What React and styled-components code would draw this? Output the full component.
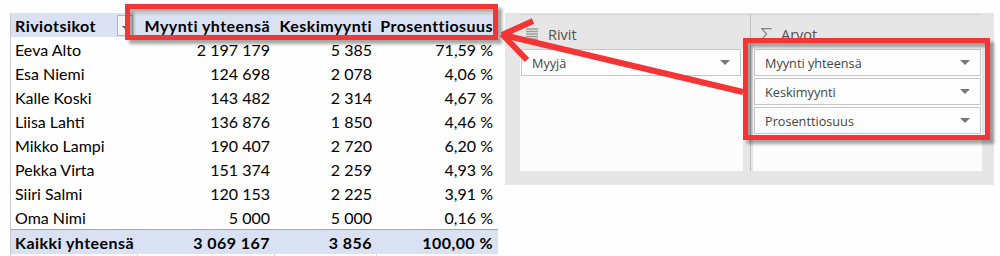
import React from 'react';
import styled, { createGlobalStyle } from 'styled-components';

const GlobalStyle = createGlobalStyle`
  body {
    margin: 0;
    background: #fefefe;
  }
`;

const Page = styled.div`
  position: relative;
  width: 1000px;
  height: 256px;
  overflow: hidden;
  display: flex;
  align-items: flex-start;
`;

// ---- pivot table ----
const Sheet = styled.div`
  margin: 13px 0 0 10px;
  border-left: 1px solid #c8c8c8;
  font-family: Lato, "Liberation Sans", sans-serif;
  font-size: 16px;
  color: #000;
`;

const Row = styled.div`
  display: grid;
  grid-template-columns: 127px 137px 102px 121px;
  height: ${p => (p.$foot ? '2px' : '24px')};
  align-items: center;
  font-weight: ${p => (p.$bold ? 700 : 400)};
  letter-spacing: ${p => (p.$bold ? '0.45px' : 'normal')};
  background: ${p => (p.$shaded ? '#d9e1f2' : 'transparent')};
  border-top: ${p => (p.$total ? '1px solid #8ea9db' : 'none')};
`;

const Cell = styled.div`
  padding: 0 ${p => (p.$first ? '0' : '5px')} 0 ${p => (p.$first ? '4px' : '0')};
  text-align: ${p => (p.$first ? 'left' : 'right')};
  white-space: nowrap;
`;

const HeadCell = styled(Cell)`
  display: flex;
  align-items: center;
  justify-content: space-between;
  padding-right: 5px;
`;

const FilterButton = styled.div`
  width: 16px;
  height: 21px;
  box-sizing: border-box;
  border: 1px solid #b4b4b4;
  background: #f3f3f3;
  display: flex;
  align-items: center;
  justify-content: center;

  &::after {
    content: '';
    border-left: 3px solid transparent;
    border-right: 3px solid transparent;
    border-top: 3px solid #555;
    margin-top: 4px;
  }
`;

const GridLine = styled.div`
  height: 2px;
  border-right: 1px solid #d6d6d6;
`;

// ---- field list pane ----
const FieldPane = styled.div`
  margin: 13px 0 0 7px;
  width: 489px;
  height: 172px;
  box-sizing: border-box;
  background: #e6e6e6;
  padding: 1px 12px 14px 15px;
  display: flex;
  font-family: "Open Sans", "Noto Sans", sans-serif;
`;

const Areas = styled.div`
  flex: 1;
  display: flex;
  border-top: 1px solid #d3d3d3;
`;

const Area = styled.div`
  width: ${p => p.$width}px;
  display: flex;
  flex-direction: column;
`;

const Splitter = styled.div`
  width: 1px;
  margin: 0 2px 0 7px;
  background: #bcbcbc;
`;

const AreaHead = styled.div`
  height: 34px;
  box-sizing: border-box;
  padding-top: 4px;
  display: flex;
  align-items: center;
  gap: ${p => p.$gap}px;
  padding-left: ${p => p.$indent}px;
  color: #505050;
  font-size: 14.5px;
`;

const FieldList = styled.div`
  flex: 1;
  background: #fcfcfc;
  padding: 0 ${p => p.$right}px 0 1px;
  display: flex;
  flex-direction: column;
  gap: 2px;
`;

const FieldItem = styled.div`
  height: 27px;
  box-sizing: border-box;
  border: 1px solid #c6c6c6;
  background: #fdfdfd;
  padding: 0 10px;
  display: flex;
  align-items: center;
  justify-content: space-between;
  color: #444;
  font-size: 12.7px;
`;

const Caret = styled.span`
  width: 0;
  height: 0;
  border-left: 5px solid transparent;
  border-right: 5px solid transparent;
  border-top: 5px solid #777;
`;

// ---- annotations ----
const Highlight = styled.div`
  position: absolute;
  left: ${p => p.$x}px;
  top: ${p => p.$y}px;
  width: ${p => p.$w}px;
  height: ${p => p.$h}px;
  box-sizing: border-box;
  border: 5px solid #f33535;
  box-shadow: 4px 4px 3px rgba(0, 0, 0, 0.35), inset 4px 4px 3px rgba(0, 0, 0, 0.3);
  pointer-events: none;
`;

const Overlay = styled.svg`
  position: absolute;
  left: 0;
  top: 0;
  pointer-events: none;
`;

const RowsIcon = () => (
  <svg width="12" height="12" viewBox="0 0 12 12">
    {[1, 3.5, 6, 8.5, 11].map(y => (
      <line key={y} x1="0" x2="12" y1={y} y2={y} stroke="#9a9a9a" strokeWidth="1.4" />
    ))}
  </svg>
);

const SigmaIcon = () => (
  <svg width="11" height="12" viewBox="0 0 11 12">
    <path d="M10 1.5 V0.6 H0.8 L5.6 6 L0.8 11.4 H10 V10.5" fill="none" stroke="#808080" strokeWidth="1.2" />
  </svg>
);

const rows = [
  ['Eeva Alto', '2 197 179', '5 385', '71,59 %'],
  ['Esa Niemi', '124 698', '2 078', '4,06 %'],
  ['Kalle Koski', '143 482', '2 314', '4,67 %'],
  ['Liisa Lahti', '136 876', '1 850', '4,46 %'],
  ['Mikko Lampi', '190 407', '2 720', '6,20 %'],
  ['Pekka Virta', '151 374', '2 259', '4,93 %'],
  ['Siiri Salmi', '120 153', '2 225', '3,91 %'],
  ['Oma Nimi', '5 000', '5 000', '0,16 %'],
];

const values = ['Myynti yhteensä', 'Keskimyynti', 'Prosenttiosuus'];

export default function App() {
  return (
    <Page>
      <GlobalStyle />
      <Sheet>
        <Row $bold $shaded>
          <HeadCell $first>
            Riviotsikot
            <FilterButton />
          </HeadCell>
          <Cell>Myynti yhteensä</Cell>
          <Cell>Keskimyynti</Cell>
          <Cell>Prosenttiosuus</Cell>
        </Row>
        {rows.map(r => (
          <Row key={r[0]}>
            <Cell $first>{r[0]}</Cell>
            <Cell>{r[1]}</Cell>
            <Cell>{r[2]}</Cell>
            <Cell>{r[3]}</Cell>
          </Row>
        ))}
        <Row $bold $shaded $total>
          <Cell $first>Kaikki yhteensä</Cell>
          <Cell>3 069 167</Cell>
          <Cell>3 856</Cell>
          <Cell>100,00 %</Cell>
        </Row>
        <Row $foot>
          <GridLine />
          <GridLine />
          <GridLine />
          <div />
        </Row>
      </Sheet>

      <FieldPane>
        <Areas>
          <Area $width={223}>
            <AreaHead $indent={6} $gap={10}>
              <RowsIcon />
              Rivit
            </AreaHead>
            <FieldList $right={2}>
              <FieldItem>
                Myyjä
                <Caret />
              </FieldItem>
            </FieldList>
          </Area>
          <Splitter />
          <Area $width={229}>
            <AreaHead $indent={8} $gap={9}>
              <SigmaIcon />
              Arvot
            </AreaHead>
            <FieldList $right={1}>
              {values.map(v => (
                <FieldItem key={v}>
                  {v}
                  <Caret />
                </FieldItem>
              ))}
            </FieldList>
          </Area>
        </Areas>
      </FieldPane>

      <Highlight $x={125} $y={4} $w={373} $h={36} />
      <Highlight $x={743} $y={38} $w={247} $h={102} />

      <Overlay width="1000" height="256">
        <g stroke="#f33535" strokeWidth="6" fill="none" strokeLinecap="butt">
          <line x1="503" y1="35" x2="743" y2="92" />
          <line x1="502" y1="35" x2="533" y2="21" />
          <line x1="502" y1="34" x2="527" y2="60" />
        </g>
      </Overlay>
    </Page>
  );
}
